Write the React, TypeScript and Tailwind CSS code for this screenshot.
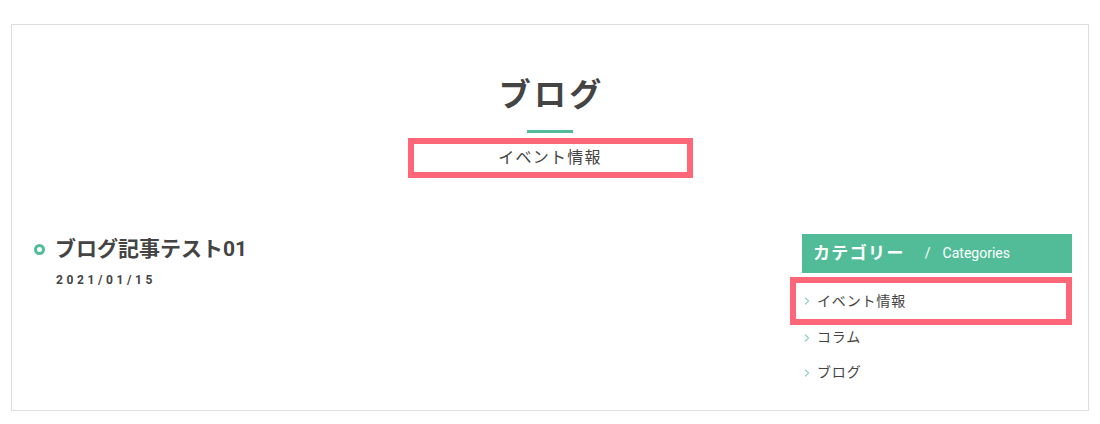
import { ChevronRight } from "lucide-react";

const font = { fontFamily: 'Roboto, "Noto Sans CJK JP", sans-serif' };

export default function App() {
  const categories = ["イベント情報", "コラム", "ブログ"];

  return (
    <div className="w-[1100px] h-[424px] bg-white px-[11px] pt-[24px]" style={font}>
      <div className="h-[387px] border border-[#dddddd] text-[#444444]">
        <div className="flex flex-col items-center pt-[46px]">
          <h1 className="text-[32px] leading-[48px] font-bold tracking-[0.1em] pl-[0.1em] text-[#444444]">ブログ</h1>
          <div className="w-[46px] h-[3px] bg-[#52bc98] mt-[11px]" />
          <div className="w-[285px] h-[40px] border-[6px] border-[#ff6779] mt-[5px] flex items-center justify-center text-[16px] tracking-[0.08em] text-[#444444]">
            イベント情報
          </div>
        </div>

        <div className="flex justify-between pl-[22px] pr-[16px] mt-[56px]">
          <div>
            <div className="flex items-center gap-[10px]">
              <span className="w-[11px] h-[11px] rounded-full border-[3px] border-[#52bc98]" />
              <h2 className="text-[21px] leading-[30px] font-bold text-[#444444]">ブログ記事テスト01</h2>
            </div>
            <p className="mt-[7px] ml-[22px] text-[12px] font-bold tracking-[0.3em] text-[#444444]">2021/01/15</p>
          </div>

          <div className="w-[270px]">
            <div className="h-[39px] bg-[#52bc98] flex items-center pl-[11px] text-white">
              <span className="text-[17px] font-bold tracking-[0.08em]">カテゴリー</span>
              <span className="text-[14px] ml-[20px]">/</span>
              <span className="text-[14px] ml-[12px]">Categories</span>
            </div>
            <ul className="mt-[4px]">
              {categories.map((c, i) => (
                <li
                  key={c}
                  className={
                    i === 0
                      ? "-ml-[12px] h-[48px] border-[6px] border-[#ff6779] flex items-center pl-[5px] text-[14px] tracking-[0.06em]"
                      : "h-[35px] flex items-center -ml-[1px] text-[14px] tracking-[0.06em]"
                  }
                  style={i === 1 ? { marginTop: -5 } : undefined}
                >
                  <ChevronRight className="w-[12px] h-[12px] text-[#8fd3bc] mr-[4px]" strokeWidth={2.5} />
                  {c}
                </li>
              ))}
            </ul>
          </div>
        </div>
      </div>
    </div>
  );
}
